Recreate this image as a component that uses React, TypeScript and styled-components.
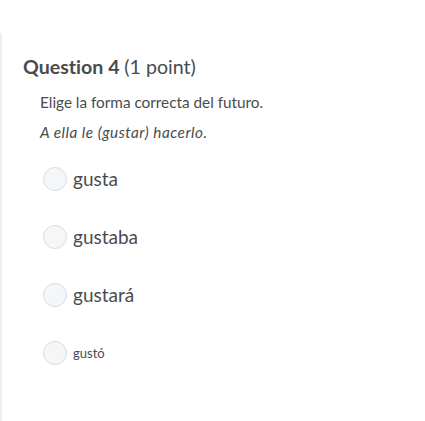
import styled, { createGlobalStyle } from 'styled-components';

const GlobalStyle = createGlobalStyle`
  html, body {
    margin: 0;
    padding: 0;
    background: #ffffff;
  }
  body {
    font-family: Lato, 'Liberation Sans', sans-serif;
    font-variant-ligatures: none;
    color: #494c4e;
  }
`;

const Page = styled.div`
  width: 425px;
  height: 421px;
  padding-top: 33px;
  box-sizing: border-box;
  overflow: hidden;
`;

const Card = styled.section`
  border-left: 2px solid #efefef;
  height: 100%;
  padding: 20px 0 0 21px;
  box-sizing: border-box;
`;

const Title = styled.h2`
  margin: 0;
  font-size: 19.6px;
  line-height: 28px;
  font-weight: 700;
  color: #494c4e;
`;

const Points = styled.span`
  font-weight: 400;
`;

const Body = styled.div`
  padding-left: 17px;
  margin-top: 11px;
`;

const Prompt = styled.p<{ $italic?: boolean }>`
  margin: 0 0 10px;
  font-size: 15.3px;
  line-height: 20px;
  font-style: ${(p) => (p.$italic ? 'italic' : 'normal')};
  letter-spacing: ${(p) => (p.$italic ? '0.5px' : '0')};
  color: #494c4e;
`;

const Options = styled.div`
  display: flex;
  flex-direction: column;
  gap: 34px;
  margin-top: 25px;
  margin-left: 20px;
`;

const Option = styled.label`
  display: flex;
  align-items: center;
  gap: 6px;
  cursor: pointer;
`;

const Radio = styled.span`
  width: 22px;
  height: 22px;
  border-radius: 50%;
  border: 1px solid #d9dcdf;
  background: #f5f6f8;
  flex-shrink: 0;
`;

const OptionText = styled.span<{ $small?: boolean }>`
  font-size: ${(p) => (p.$small ? '13px' : '19px')};
  line-height: 24px;
  color: #494c4e;
`;

const answers = [
  { text: 'gusta' },
  { text: 'gustaba' },
  { text: 'gustará' },
  { text: 'gustó', small: true },
];

export default function App() {
  return (
    <>
      <GlobalStyle />
      <Page>
        <Card>
          <Title>
            Question 4 <Points>(1 point)</Points>
          </Title>
          <Body>
            <Prompt>Elige la forma correcta del futuro.</Prompt>
            <Prompt $italic>A ella le (gustar) hacerlo.</Prompt>
          </Body>
          <Options>
            {answers.map((a) => (
              <Option key={a.text}>
                <Radio />
                <OptionText $small={a.small}>{a.text}</OptionText>
              </Option>
            ))}
          </Options>
        </Card>
      </Page>
    </>
  );
}
